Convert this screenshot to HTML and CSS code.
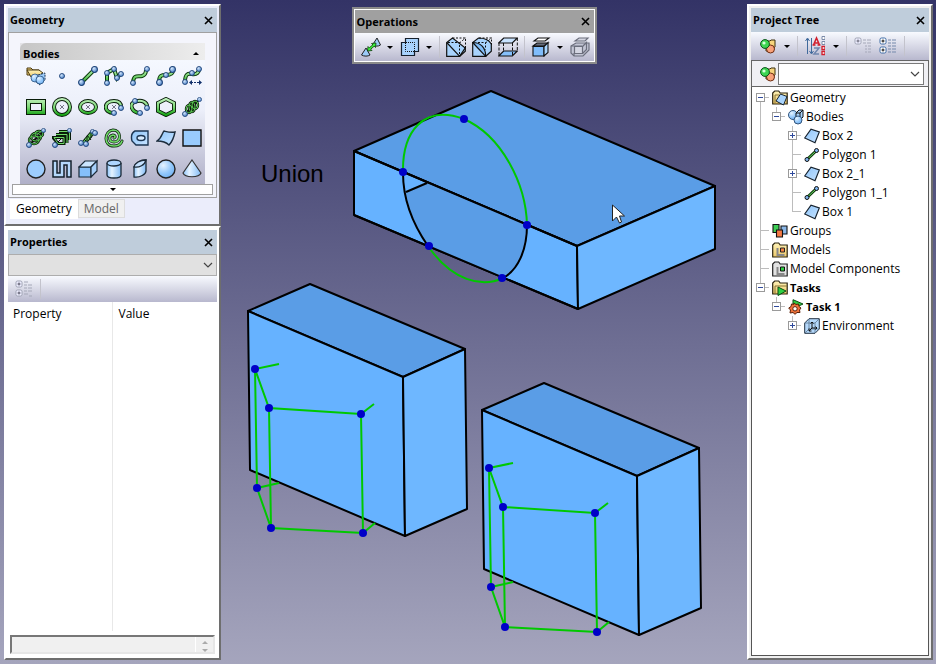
FILE: index.html
```html
<!DOCTYPE html>
<html lang="en">
<head>
<meta charset="utf-8">
<title>Model Workspace</title>
<link rel="stylesheet" href="styles.css">
</head>
<body>
<svg class="defs" aria-hidden="true">
  <defs>
    <linearGradient id="green" gradientUnits="userSpaceOnUse" x1="0" y1="1" x2="0" y2="19"><stop offset="0" stop-color="#c4f2c0"/><stop offset=".5" stop-color="#7dd877"/><stop offset="1" stop-color="#0a9c08"/></linearGradient>
    <linearGradient id="sky" x1="0" y1="0" x2="1" y2="1"><stop offset="0" stop-color="#8fc6fb"/><stop offset="1" stop-color="#c6e2ff"/></linearGradient>
    <linearGradient id="shine"><stop offset="0" stop-color="#8cc4fa"/><stop offset=".35" stop-color="#e4f2ff"/><stop offset="1" stop-color="#82bcf6"/></linearGradient>
    <radialGradient id="ball" cx=".35" cy=".3" r=".8"><stop offset="0" stop-color="#e6f3ff"/><stop offset=".6" stop-color="#8fc6fb"/><stop offset="1" stop-color="#6faeee"/></radialGradient>
    <radialGradient id="knob" cx=".35" cy=".3" r=".8"><stop offset="0" stop-color="#d8ebff"/><stop offset="1" stop-color="#3a74c0"/></radialGradient>
    <linearGradient id="fold" x1="0" y1="0" x2="0" y2="1"><stop offset="0" stop-color="#fff3b8"/><stop offset="1" stop-color="#edc96a"/></linearGradient>
  </defs>
  <symbol id="dot" viewBox="0 0 6 6"><circle cx="3" cy="3" r="2.500" fill="url(#knob)" stroke="#1f4478" stroke-width=".9"/></symbol>
  <symbol id="i-import" viewBox="0 0 20 20">
    <path d="M1 4V2h4l2 2h6v2L8 9H1z" fill="#f7d57c" stroke="#4a3a10"/><path d="M1 4h12l4 3-7 4H5z" fill="url(#fold)" stroke="#4a3a10"/>
    <circle cx="9" cy="12" r="4" fill="url(#ball)" stroke="#28507c" stroke-width=".8"/><path d="M12 9l7-2v7l-5 5-4-3z" fill="#9ccbfa" stroke="#1c3552" stroke-dasharray="2 1"/><circle cx="14" cy="14" r="4" fill="url(#ball)" stroke="#28507c" stroke-width=".8"/>
  </symbol>
  <symbol id="i-point" viewBox="0 0 20 20"><use href="#dot" x="7" y="7" width="6" height="6"/></symbol>
  <symbol id="i-line" viewBox="0 0 20 20"><path d="M4 16 16 4" stroke="#0c3b0c" stroke-width="4"/><path d="M4 16 16 4" stroke="url(#green)" stroke-width="2"/><use href="#dot" x="0" y="13" width="7" height="7"/><use href="#dot" x="13" y="0" width="7" height="7"/></symbol>
  <symbol id="i-poly" viewBox="0 0 20 20"><g fill="none"><path d="M3 16V7l7-4 3 9 4-5" stroke="#0c3b0c" stroke-width="4"/><path d="M3 16V7l7-4 3 9 4-5" stroke="url(#green)" stroke-width="2"/></g><use href="#dot" x="0" y="14" width="6" height="6"/><use href="#dot" x="0" y="4" width="6" height="6"/><use href="#dot" x="7" y="0" width="6" height="6"/><use href="#dot" x="10" y="9" width="6" height="6"/><use href="#dot" x="14" y="5" width="6" height="6"/></symbol>
  <symbol id="i-curve" viewBox="0 0 20 20"><g fill="none"><path d="M3 16c1-8 5-5 9-6 3-1 4-3 4-6" stroke="#0c3b0c" stroke-width="4"/><path d="M3 16c1-8 5-5 9-6 3-1 4-3 4-6" stroke="url(#green)" stroke-width="2"/></g><use href="#dot" x="0" y="14" width="6" height="6"/><use href="#dot" x="14" y="0" width="6" height="6"/></symbol>
  <symbol id="i-spline" viewBox="0 0 20 20"><g fill="none"><path d="M3 16c0-7 3-7 7-7 6 0 7-2 7-5" stroke="#0c3b0c" stroke-width="4"/><path d="M3 16c0-7 3-7 7-7 6 0 7-2 7-5" stroke="url(#green)" stroke-width="2"/></g><use href="#dot" x="0" y="13" width="7" height="7"/><use href="#dot" x="7" y="6" width="6" height="6"/><use href="#dot" x="13" y="0" width="7" height="7"/></symbol>
  <symbol id="i-splinefit" viewBox="0 0 20 20"><g fill="none"><path d="M3 16c0-8 3-9 7-8 5 1 7-2 7-5" stroke="#0c3b0c" stroke-width="4"/><path d="M3 16c0-8 3-9 7-8 5 1 7-2 7-5" stroke="url(#green)" stroke-width="2"/></g><use href="#dot" x="0" y="13" width="6" height="6"/><use href="#dot" x="7" y="4" width="6" height="6"/><use href="#dot" x="14" y="0" width="6" height="6"/><path d="M8 16.500h3m1 0h2m1 0h4" stroke="#12306a"/><path d="m7 16.500 3-2.500v5zM20 16.500 17 14v5z" fill="#12306a"/></symbol>
  <symbol id="i-rect" viewBox="0 0 20 20"><path d="M2.500 4.500h15v11h-15z" fill="none" stroke="#081c08" stroke-width="5"/><path d="M2.500 4.500h15v11h-15z" fill="none" stroke="url(#green)" stroke-width="3"/></symbol>
  <symbol id="i-circle" viewBox="0 0 20 20"><g fill="none"><circle cx="10" cy="10" r="8" stroke="#081c08" stroke-width="4"/><circle cx="10" cy="10" r="8" stroke="url(#green)" stroke-width="2.200"/><path d="m8 8 4 4m0-4-4 4" stroke="#667" stroke-width=".9"/></g></symbol>
  <symbol id="i-ellipse" viewBox="0 0 20 20"><g fill="none"><ellipse cx="10" cy="10" rx="8" ry="6" stroke="#081c08" stroke-width="4"/><ellipse cx="10" cy="10" rx="8" ry="6" stroke="url(#green)" stroke-width="2.200"/><path d="m8 8 4 4m0-4-4 4" stroke="#667" stroke-width=".9"/></g></symbol>
  <symbol id="i-earc" viewBox="0 0 20 20"><g fill="none"><path d="M10 16C-1 16-1 4 10 4c5 0 7 2 7 6" stroke="#081c08" stroke-width="4"/><path d="M10 16C-1 16-1 4 10 4c5 0 7 2 7 6" stroke="url(#green)" stroke-width="2.200"/><path d="m8 8 4 4m0-4-4 4" stroke="#667" stroke-width=".9"/></g><use href="#dot" x="7" y="13" width="6" height="6"/><use href="#dot" x="14" y="8" width="6" height="6"/></symbol>
  <symbol id="i-arc" viewBox="0 0 20 20"><g fill="none"><path d="M8 16C1 14-1 6 5 5c6-3 13 0 12 6" stroke="#081c08" stroke-width="4"/><path d="M8 16C1 14-1 6 5 5c6-3 13 0 12 6" stroke="url(#green)" stroke-width="2.200"/></g><use href="#dot" x="2" y="1" width="6" height="6"/><use href="#dot" x="7" y="13" width="6" height="6"/><use href="#dot" x="14" y="8" width="6" height="6"/></symbol>
  <symbol id="i-hex" viewBox="0 0 20 20"><g fill="none"><path d="m10 2 8 4v8l-8 4-8-4V6z" stroke="#081c08" stroke-width="4"/><path d="m10 2 8 4v8l-8 4-8-4V6z" stroke="url(#green)" stroke-width="2.200"/></g></symbol>
  <symbol id="i-helix" viewBox="0 0 20 20"><g fill="none"><path d="M3 17 18 2" stroke="#111" stroke-width="2"/><g stroke="#081c08" stroke-width="2.400"><ellipse cx="7" cy="12" rx="3" ry="4"/><ellipse cx="10" cy="10" rx="3" ry="5"/><ellipse cx="13" cy="8" rx="3" ry="4"/></g><g stroke="#5ccc54"><ellipse cx="7" cy="12" rx="3" ry="4"/><ellipse cx="10" cy="10" rx="3" ry="5"/><ellipse cx="13" cy="8" rx="3" ry="4"/></g></g><use href="#dot" x="0" y="14" width="6" height="6"/><use href="#dot" x="15" y="0" width="5" height="5"/></symbol>
  <symbol id="i-helix2" viewBox="0 0 20 20"><g fill="none"><path d="M3 17 18 3" stroke="#111" stroke-width="2"/><g stroke="#081c08" stroke-width="2.400"><ellipse cx="8" cy="12" rx="5" ry="4"/><ellipse cx="10" cy="9" rx="5" ry="4"/><ellipse cx="13" cy="6" rx="4" ry="3"/></g><g stroke="#5ccc54"><ellipse cx="8" cy="12" rx="5" ry="4"/><ellipse cx="10" cy="9" rx="5" ry="4"/><ellipse cx="13" cy="6" rx="4" ry="3"/></g></g><use href="#dot" x="0" y="14" width="6" height="6"/><use href="#dot" x="15" y="0" width="5" height="5"/></symbol>
  <symbol id="i-coil" viewBox="0 0 20 20"><g fill="none"><path d="M3 17 18 2" stroke="#111"/><path d="M7 3.500h10.500V12M4 6.500h11V15M1 9.500h11v6H6z" stroke="#081c08" stroke-width="3"/><path d="M7 3.500h10.500V12M4 6.500h11V15M2 9.500h10v6H6z" stroke="#6fd868"/></g><use href="#dot" x="0" y="14" width="6" height="6"/><use href="#dot" x="15" y="0" width="5" height="5"/></symbol>
  <symbol id="i-path" viewBox="0 0 20 20"><path d="M5 16 15 4" stroke="#081c08" stroke-width="5"/><path d="M5 16 15 4" stroke="#62c95b" stroke-width="3"/><path d="m6 11 4 4m-1-8 4 5M9 8v6M13 5v5" stroke="#081c08"/><use href="#dot" x="0" y="12" width="6" height="6"/><use href="#dot" x="5" y="13" width="6" height="6"/><use href="#dot" x="12" y="1" width="5" height="5"/><use href="#dot" x="14" y="2" width="6" height="6"/></symbol>
  <symbol id="i-spiral" viewBox="0 0 20 20"><g fill="none" stroke-linecap="round"><path d="M10 10c2-1 1-3-1-3-5 1-4 7 1 7 8 0 7-12-1-12C0 3-1 18 10 18c4 0 7-2 8-5" stroke="#081c08" stroke-width="3"/><path d="M10 10c2-1 1-3-1-3-5 1-4 7 1 7 8 0 7-12-1-12C0 3-1 18 10 18c4 0 7-2 8-5" stroke="#6fd868" stroke-width="1.700"/></g></symbol>
  <symbol id="i-plate" viewBox="0 0 20 20"><path d="M5 3h13v14H6l-4-4C1 9 1 5 5 3z" fill="url(#sky)" stroke="#1c3552" stroke-width="1.400"/><ellipse cx="11" cy="10" rx="4" ry="2.500" fill="#d9ecff" stroke="#1c3552" stroke-width="1.400"/></symbol>
  <symbol id="i-surface" viewBox="0 0 20 20"><path d="M1 13C6 10 6 5 8 3c4 1 7 2 11 1-1 5-2 9-6 13-3-3-7-4-12-4z" fill="url(#sky)" stroke="#1c2c3c" stroke-width="1.400"/></symbol>
  <symbol id="i-square" viewBox="0 0 20 20"><path d="M1 2h18v16H1z" fill="#99cbfd" stroke="#111" stroke-width="1.400"/></symbol>
  <symbol id="i-disk" viewBox="0 0 20 20"><circle cx="10" cy="10" r="9" fill="#9dcdfd" stroke="#222" stroke-width="1.400"/></symbol>
  <symbol id="i-snake" viewBox="0 0 20 20"><path d="M1 2h4v12h3V2h11v16h-4V6h-3v12H1z" fill="#b5d8fb" stroke="#15202c" stroke-width="1.500"/></symbol>
  <symbol id="i-box" viewBox="0 0 20 20"><g stroke="#1b2a38" stroke-width="1.200"><path d="M1 8h12v10H1z" fill="#85bffa"/><path d="m1 8 6-6h12l-6 6z" fill="#cbe5ff"/><path d="m13 8 6-6v10l-6 6z" fill="#a6d0fb"/></g></symbol>
  <symbol id="i-cyl" viewBox="0 0 20 20"><path d="M3 4v12c0 4 14 4 14 0V4" fill="url(#shine)" stroke="#1b2a38" stroke-width="1.300"/><ellipse cx="10" cy="4" rx="7" ry="3" fill="#aed6ff" stroke="#1b2a38" stroke-width="1.300"/></symbol>
  <symbol id="i-prism" viewBox="0 0 20 20"><path d="M4 8v10c6 1 12-3 12-6V1C10 1 5 4 4 8z" fill="url(#shine)" stroke="#1b2a38" stroke-width="1.300"/><path d="M4 8c5 1 11-2 12-7C10 1 5 4 4 8z" fill="#c4e1ff" stroke="#1b2a38" stroke-width="1.300"/></symbol>
  <symbol id="i-sphere" viewBox="0 0 20 20"><circle cx="10" cy="10" r="9" fill="url(#ball)" stroke="#222" stroke-width="1.400"/></symbol>
  <symbol id="i-cone" viewBox="0 0 20 20"><path d="m10 1 9 13c-2 5-16 5-18 0z" fill="url(#shine)" stroke="#333" stroke-width="1.200"/></symbol>

  <symbol id="o-move" viewBox="0 0 20 20"><path d="M.5 18 5 11l4 7c-2 1.500-6 1.500-8.500 0zM11.500 8 16 1l3.500 7c-2 1.500-6 1.500-8 0z" fill="#9ccbf8" stroke="#222"/><path d="m6.500 14 .5-4.500 1.300 1.300 3.500-3L10.500 6.500 15 6l-.5 4.500-1.300-1.300-3.500 3 1.300 1.300z" fill="#3df03d" stroke="#083808" stroke-width=".8"/></symbol>
  <symbol id="o-union" viewBox="0 0 20 20"><path d="M5.500 1.500h13v13h-4v4h-13v-13h4z" fill="#a8d3fd" stroke="#15202c" stroke-width="1.200"/><path d="M5.500 6v8.500H14M6 5.500h8.500V14" fill="none" stroke="#111" stroke-dasharray="1 1"/></symbol>
  <symbol id="o-chamfer" viewBox="0 0 20 20"><path d="M.7 5.500v13.800h13l5.600-5V11L6.500 1z" fill="#a8d3fd" stroke="#111" stroke-width="1.200"/><path d="M.7 5.500l13 13.800M13.500 19.300l5.800-8.500" fill="none" stroke="#111" stroke-width="1.200"/><path d="M6.500 1h13v11M2 5.500h11.500v12M13.500 6l6-5" fill="none" stroke="#111" stroke-dasharray="2 1.500"/></symbol>
  <symbol id="o-fillet" viewBox="0 0 20 20"><path d="M.7 5.500v13.800h13l5.600-5V7C17 3 13 1 6.500 1z" fill="#a8d3fd" stroke="#111" stroke-width="1.200"/><path d="M.7 5.500c8 0 13 5 13 13.800z" fill="#80bdf8" stroke="#111" stroke-width="1.200"/><path d="M7 1h12.500v8M13.500 6l6-5M6 5.500h7.500v7" fill="none" stroke="#111" stroke-dasharray="2 1.500"/></symbol>
  <symbol id="o-shell" viewBox="0 0 20 20"><path d="m.7 6 5-5h13.600l-5 5z" fill="#c8e3ff" stroke="#111" stroke-width="1.200"/><path d="m.7 19 5-5h13.600l-5 5z" fill="#86c0fa" stroke="#111" stroke-width="1.200"/><path d="M1 6v13M14.500 6v13M19.300 1v13M5.500 6v8" stroke="#111" stroke-dasharray="3 1.500"/></symbol>
  <symbol id="o-cover" viewBox="0 0 20 20"><g stroke="#111" stroke-width="1.100"><path d="m2 9 4-3h11l-4 3z" fill="#666c7c"/><path d="m3 4 4-3h11l-4 3z" fill="#fff"/><path d="M2 9.500h11v9.500H2z" fill="#80bdfb"/><path d="m13 9.500 4-4v10L13 19z" fill="#aad5fd"/></g></symbol>
  <symbol id="o-copy" viewBox="0 0 20 20"><g stroke="#6b6e7c" stroke-width="1.200" fill="#d4d6e2"><path d="m5 4 4-3h9l-3 3z"/><path d="M1 9l5-3h13v7l-6 6H4l-3-3z" fill="#c2c5d4"/><path d="M4.500 9.500h8v7h-8z"/><path d="m12.500 9.500 4-4v7l-4 4M1 9h11M4 19v-3" fill="none"/></g></symbol>

  <symbol id="t-objects" viewBox="0 0 16 16"><path d="M6 3h4l1-1h4v7l-4 4H6z" fill="#f7d57c" stroke="#3b300e"/><circle cx="10.500" cy="11" r="4" fill="#f9a27a" stroke="#6b2b10"/><circle cx="5" cy="6" r="4.400" fill="#3ed552" stroke="#0b541b"/><circle cx="4" cy="5" r="1.600" fill="#d8ffdc"/></symbol>
  <symbol id="t-sort" viewBox="0 0 20 20"><path d="M2.500 18V3M.5 5l2-3 2 3M6.500 2v15m-2-2 2 3 2-3" fill="none" stroke="#406a9c"/><path d="m8.500 9 3-7 3 7M7.500 9h3m2 0h3M9.500 7h4" fill="none" stroke="#d21e2c" stroke-width="1.500"/><path d="M9 12h5l-5 6h5" fill="none" stroke="#6f86ae" stroke-width="1.500"/><g fill="#fff"><path d="M17 .5h3v3h-3zM17 5.500h3v3h-3z" stroke="#7b8aa8"/><path d="M17 10.500h3v3h-3zM17 15.500h3v3h-3z" stroke="#d21e2c" stroke-width="1.300"/></g></symbol>
  <symbol id="t-collapse" viewBox="0 0 18 18"><rect x="1" y="1" width="6" height="6" rx="1.500" fill="#eef" stroke="#9fa3b3"/><path d="M2.500 4h3M4 2.500v3" stroke="#667"/><path d="M9 3h3m1 0h4M9 6h3m1 0h4M11 9h2m1 0h3M11 12h2m1 0h3M11 15h2m1 0h3" stroke="#a5a8b8"/></symbol>
  <symbol id="t-expand" viewBox="0 0 18 18"><rect x="1" y="1" width="6" height="6" rx="1.500" fill="#fff" stroke="#3d6ba5"/><rect x="1" y="10" width="6" height="6" rx="1.500" fill="#fff" stroke="#3d6ba5"/><path d="M2.500 4h3M4 2.500v3M2.500 13h3M4 11.500v3" stroke="#111"/><path d="M9 3h3m1 0h4M9 6h3m1 0h4M9 9h3m1 0h4M9 12h3m1 0h4M9 15h3m1 0h4" stroke="#7489ab"/></symbol>
  <symbol id="t-expand-off" viewBox="0 0 18 18"><rect x="1" y="1" width="6" height="6" rx="1.500" fill="#eef" stroke="#9fa3b3"/><rect x="1" y="10" width="6" height="6" rx="1.500" fill="#eef" stroke="#9fa3b3"/><path d="M2.500 4h3M4 2.500v3M2.500 13h3M4 11.500v3" stroke="#556"/><path d="M9 2h4M9 5h3m1 0h4M9 8h3m1 0h4M9 11h3m1 0h4M9 14h4m1 2h3" stroke="#a5a8b8"/></symbol>

  <symbol id="f-geometry" viewBox="0 0 16 16"><path d="M.7 14V3l2-2h4l1.500 2h7v11z" fill="url(#fold)" stroke="#2b2410" stroke-width="1.200"/><path d="M3 13V5h4" fill="none" stroke="#8a7434"/><path d="M8.500 4 15 6.500 11.500 15 4 11z" fill="#a9d4fd" stroke="#16222e"/></symbol>
  <symbol id="f-bodies" viewBox="0 0 16 16"><circle cx="5" cy="6" r="4.500" fill="url(#ball)" stroke="#33557c"/><path d="M8 4l3-3h4v7l-3 3H8z" fill="#a9d3fb" stroke="#111"/><path d="M8 4h4v6M12 4l3-3" fill="none" stroke="#111"/><circle cx="10" cy="11" r="4" fill="url(#ball)" stroke="#33557c"/></symbol>
  <symbol id="f-box" viewBox="0 0 16 16"><path d="M.7 10 7 1.200 15.300 4 11 14.700z" fill="url(#sky)" stroke="#16222e" stroke-width="1.200"/></symbol>
  <symbol id="f-polygon" viewBox="0 0 16 16"><path d="M3 12.500 12.500 3.500" stroke="#0c3b0c" stroke-width="3"/><path d="M3 12.500 12.500 3.500" stroke="#6ad463" stroke-width="1"/><circle cx="3" cy="12.500" r="2" fill="#7fb4ec" stroke="#111"/><circle cx="12.500" cy="3.500" r="2" fill="#7fb4ec" stroke="#111"/></symbol>
  <symbol id="f-groups" viewBox="0 0 16 16"><g stroke="#111" stroke-width="1.100"><path d="M9 3h6v8H9z" fill="#8bb8e8"/><path d="M1 1.500h6v8H1z" fill="#3fce55"/><path d="M4.500 7h6v7h-6z" fill="#f47a45"/></g></symbol>
  <symbol id="f-models" viewBox="0 0 16 16"><path d="M.7 15V3l2-2h4l1.500 2h7v12z" fill="url(#fold)" stroke="#2b2410" stroke-width="1.200"/><path d="M5.500 6v7h7" fill="none" stroke="#888" stroke-width="2"/><path d="M8.500 6h4v4h-4z" fill="#f58142" stroke="#222"/></symbol>
  <symbol id="f-components" viewBox="0 0 16 16"><path d="M.7 15V3l2-2h4l1.500 2h7v12z" fill="#e2e2e2" stroke="#222" stroke-width="1.200"/><path d="M5.500 6v7h7" fill="none" stroke="#888" stroke-width="2"/><path d="M8.500 6h4v4h-4z" fill="#2fd043" stroke="#111"/></symbol>
  <symbol id="f-tasks" viewBox="0 0 16 16"><path d="M.7 14V3l2-2h4l1.500 2h7v11z" fill="url(#fold)" stroke="#2b2410" stroke-width="1.200"/><path d="M3 14V6h12" fill="none" stroke="#8a7434"/><path d="M6 7v8.500l8-4.500z" fill="#2fd043" stroke="#0b4b12"/></symbol>
  <symbol id="f-task" viewBox="0 0 16 16"><path d="M5 .7v9L15 5z" fill="#2fd043" stroke="#0b4b12"/><path d="m6 4 2 1.500L10.500 5l.5 2.500 2 1.500-1.500 2 .5 2.500-3 0L7 15.300 5 13.500l-3 .5.500-3L.7 9l2.300-1.500L3.500 5l2.500.3z" fill="#f0743c" stroke="#5c2008"/><circle cx="7" cy="9.800" r="2.200" fill="#fff" stroke="#5c2008"/></symbol>
  <symbol id="f-env" viewBox="0 0 16 16"><path d="M.7 5 5 .7h10.300V11L11 15.300H.7z" fill="#b4d8fb" stroke="#234"/><path d="M1 5h10v10M11 5l4-4M5 1v10h10M5 11l-4 4" fill="none" stroke="#5c7690" stroke-width=".8"/><path d="M8 4v6h5M8 10l-3 3M6.500 5.500 8 4l1.500 1.500M11.500 8.500 13 10l-1.500 1.500M5 10.500V13h2.500" fill="none" stroke="#111"/></symbol>
  <symbol id="close" viewBox="0 0 9 9"><path d="m1 1 7 7m0-7L1 8" stroke="#000" stroke-width="1.600"/></symbol>
  <symbol id="chev" viewBox="0 0 10 6"><path d="m1 1 4 4 4-4" fill="none" stroke="#444" stroke-width="1.200"/></symbol>
  <symbol id="down" viewBox="0 0 6 3"><path d="M0 0h6L3 3z"/></symbol>
  <symbol id="up" viewBox="0 0 6 3"><path d="M0 3h6L3 0z"/></symbol>
</svg>

<svg class="scene" viewBox="0 0 936 664" role="img" aria-label="Union of boxes">
  <g class="edge">
    <path class="top" d="M354 151 491 91l224 95-138 60z"/>
    <path class="front" d="M354 151 577 246l1 63-224-94z"/>
    <path class="side" d="m577 246 138-60v63l-137 60z"/>
  </g>
  <path class="cut" d="M427 183 527 225C527 250 518 270 503 278L428 246C417 229 409 211 406 192z"/>
  <path class="wire" d="M354 151 577 246M354 215 578 309M406 192 427 183M428 246C412 223 403 197 403 173M503 278C518 270 527 250 527 225"/>
  <path class="sketch" d="M403 173C402 132 423 104 464 119C502 136 526 184 527 225M428 246C452 281 482 288 503 278"/>
  <g class="node"><circle cx="403" cy="172" r="4"/><circle cx="464" cy="119" r="4"/><circle cx="527" cy="225" r="4"/><circle cx="502" cy="278" r="4"/><circle cx="429" cy="246" r="4"/></g>
  <g id="solid">
    <g class="edge">
      <path class="top" d="m248 311 62-27 155 65-62 28z"/>
      <path class="front" d="m248 311 155 66 2 159-155-66z"/>
      <path class="side" d="m403 377 62-28 2 160-62 27z"/>
    </g>
    <path class="sketch" d="m279 364-24 5 14 39 92 6 13-10M255 369l2 119 14 40 92 5 12-10M269 408l2 120M361 414l2 119M257 488l22-5"/>
    <g class="node"><circle cx="255" cy="369" r="4"/><circle cx="269" cy="408" r="4"/><circle cx="361" cy="414" r="4"/><circle cx="257" cy="488" r="4"/><circle cx="271" cy="528" r="4"/><circle cx="363" cy="533" r="4"/></g>
  </g>
  <use href="#solid" x="234" y="99"/>
  <text class="caption" x="261" y="182">Union</text>
  <path d="M612.500 205v16l4-4 3 6 2-1-2-6h5z" fill="#fff" stroke="#222"/>
</svg>

<div class="workspace">
  <div class="left">
    <section class="dock geometry">
      <header class="bar"><h2>Geometry</h2><button class="x" aria-label="Close Geometry"><svg><use href="#close"/></svg></button></header>
      <div class="palette">
        <div class="group">
          <button class="group-title"><span>Bodies</span><svg><use href="#up"/></svg></button>
          <div class="tools">
            <button aria-label="Import"><svg><use href="#i-import"/></svg></button>
            <button aria-label="Point"><svg><use href="#i-point"/></svg></button>
            <button aria-label="Line"><svg><use href="#i-line"/></svg></button>
            <button aria-label="Polyline"><svg><use href="#i-poly"/></svg></button>
            <button aria-label="Curve"><svg><use href="#i-curve"/></svg></button>
            <button aria-label="Spline"><svg><use href="#i-spline"/></svg></button>
            <button aria-label="Fitted spline"><svg><use href="#i-splinefit"/></svg></button>
            <button aria-label="Rectangle"><svg><use href="#i-rect"/></svg></button>
            <button aria-label="Circle"><svg><use href="#i-circle"/></svg></button>
            <button aria-label="Ellipse"><svg><use href="#i-ellipse"/></svg></button>
            <button aria-label="Elliptic arc"><svg><use href="#i-earc"/></svg></button>
            <button aria-label="Arc"><svg><use href="#i-arc"/></svg></button>
            <button aria-label="Hexagon"><svg><use href="#i-hex"/></svg></button>
            <button aria-label="Helix"><svg><use href="#i-helix"/></svg></button>
            <button aria-label="Wide helix"><svg><use href="#i-helix2"/></svg></button>
            <button aria-label="Square coil"><svg><use href="#i-coil"/></svg></button>
            <button aria-label="Twisted path"><svg><use href="#i-path"/></svg></button>
            <button aria-label="Spiral"><svg><use href="#i-spiral"/></svg></button>
            <button aria-label="Plate"><svg><use href="#i-plate"/></svg></button>
            <button aria-label="Surface"><svg><use href="#i-surface"/></svg></button>
            <button aria-label="Sheet"><svg><use href="#i-square"/></svg></button>
            <button aria-label="Disk"><svg><use href="#i-disk"/></svg></button>
            <button aria-label="Meander"><svg><use href="#i-snake"/></svg></button>
            <button aria-label="Box"><svg><use href="#i-box"/></svg></button>
            <button aria-label="Cylinder"><svg><use href="#i-cyl"/></svg></button>
            <button aria-label="Prism"><svg><use href="#i-prism"/></svg></button>
            <button aria-label="Sphere"><svg><use href="#i-sphere"/></svg></button>
            <button aria-label="Cone"><svg><use href="#i-cone"/></svg></button>
          </div>
        </div>
        <button class="more" aria-label="More tools"><svg><use href="#down"/></svg></button>
      </div>
      <nav class="tabs"><button class="tab on">Geometry</button><button class="tab">Model</button></nav>
    </section>

    <section class="dock properties">
      <header class="bar"><h2>Properties</h2><button class="x" aria-label="Close Properties"><svg><use href="#close"/></svg></button></header>
      <div class="combo grey"><select aria-label="Object" disabled><option></option></select><svg><use href="#chev"/></svg></div>
      <div class="strip"><button aria-label="Expand all" disabled><svg class="s18"><use href="#t-expand-off"/></svg></button><i class="sep"></i></div>
      <table class="grid">
        <thead><tr><th>Property</th><th>Value</th></tr></thead>
        <tbody><tr><td></td><td></td></tr></tbody>
      </table>
      <div class="note"><textarea aria-label="Description" disabled></textarea><div class="spin"><svg><use href="#up"/></svg><svg><use href="#down"/></svg></div></div>
    </section>
  </div>

  <section class="float">
    <header class="bar"><h2>Operations</h2><button class="x" aria-label="Close Operations"><svg><use href="#close"/></svg></button></header>
    <div class="ops">
      <button aria-label="Transform"><svg><use href="#o-move"/></svg><svg class="caret"><use href="#down"/></svg></button>
      <button aria-label="Boolean"><svg><use href="#o-union"/></svg><svg class="caret"><use href="#down"/></svg></button>
      <i class="sep"></i>
      <button aria-label="Chamfer"><svg><use href="#o-chamfer"/></svg></button>
      <button aria-label="Fillet"><svg><use href="#o-fillet"/></svg></button>
      <button aria-label="Shell"><svg><use href="#o-shell"/></svg></button>
      <i class="sep"></i>
      <button aria-label="Cover"><svg><use href="#o-cover"/></svg><svg class="caret"><use href="#down"/></svg></button>
      <button aria-label="Imprint" disabled><svg><use href="#o-copy"/></svg></button>
    </div>
  </section>

  <section class="dock project">
    <header class="bar"><h2>Project Tree</h2><button class="x" aria-label="Close Project Tree"><svg><use href="#close"/></svg></button></header>
    <div class="strip">
      <button aria-label="Show objects"><svg class="s16"><use href="#t-objects"/></svg><svg class="caret"><use href="#down"/></svg></button><i class="sep"></i>
      <button aria-label="Sort"><svg><use href="#t-sort"/></svg><svg class="caret"><use href="#down"/></svg></button><i class="sep"></i>
      <button aria-label="Collapse" disabled><svg class="s18"><use href="#t-collapse"/></svg></button>
      <button aria-label="Expand"><svg class="s18"><use href="#t-expand"/></svg></button><i class="sep"></i>
    </div>
    <div class="filter"><svg class="s16"><use href="#t-objects"/></svg><div class="combo"><select aria-label="Filter"><option></option></select><svg><use href="#chev"/></svg></div></div>
    <div class="treebox">
      <ul class="tree">
        <li><div class="row"><button class="tw" aria-label="Collapse Geometry"></button><svg><use href="#f-geometry"/></svg><span>Geometry</span></div>
          <ul>
            <li><div class="row"><button class="tw" aria-label="Collapse Bodies"></button><svg><use href="#f-bodies"/></svg><span>Bodies</span></div>
              <ul>
                <li><div class="row"><button class="tw plus" aria-label="Expand Box 2"></button><svg><use href="#f-box"/></svg><span>Box 2</span></div></li>
                <li><div class="row leaf"><svg><use href="#f-polygon"/></svg><span>Polygon 1</span></div></li>
                <li><div class="row"><button class="tw plus" aria-label="Expand Box 2_1"></button><svg><use href="#f-box"/></svg><span>Box 2_1</span></div></li>
                <li><div class="row leaf"><svg><use href="#f-polygon"/></svg><span>Polygon 1_1</span></div></li>
                <li><div class="row leaf"><svg><use href="#f-box"/></svg><span>Box 1</span></div></li>
              </ul>
            </li>
          </ul>
        </li>
        <li><div class="row leaf"><svg><use href="#f-groups"/></svg><span>Groups</span></div></li>
        <li><div class="row leaf"><svg><use href="#f-models"/></svg><span>Models</span></div></li>
        <li><div class="row leaf"><svg><use href="#f-components"/></svg><span>Model Components</span></div></li>
        <li><div class="row"><button class="tw" aria-label="Collapse Tasks"></button><svg><use href="#f-tasks"/></svg><b>Tasks</b></div>
          <ul>
            <li><div class="row"><button class="tw" aria-label="Collapse Task 1"></button><svg><use href="#f-task"/></svg><b>Task 1</b></div>
              <ul>
                <li><div class="row"><button class="tw plus" aria-label="Expand Environment"></button><svg><use href="#f-env"/></svg><span>Environment</span></div></li>
              </ul>
            </li>
          </ul>
        </li>
      </ul>
    </div>
  </section>
</div>
</body>
</html>
```
FILE: styles.css
```css
* { box-sizing: border-box; }
html, body { height: 100%; margin: 0; }
body {
  position: relative;
  overflow: hidden;
  font: 12px/16px "Open Sans", "Noto Sans", sans-serif;
  color: #000;
  background: linear-gradient(#333366, #a5a5bd);
}
button { padding: 0; border: 0; background: none; font: inherit; color: inherit; }
button, .filter { display: flex; align-items: center; justify-content: center; }
svg { display: block; width: 20px; height: 20px; flex: none; }
svg.s16 { width: 16px; height: 16px; }
svg.s18 { width: 18px; height: 18px; }
svg.caret { width: 6px; height: 3px; margin-left: 8px; }
.defs { position: absolute; width: 0; height: 0; }

.scene { position: absolute; inset: 0; width: 100%; height: 100%; }
.edge { stroke: #000; stroke-width: 2; stroke-linejoin: round; }
.top, .cut { fill: #5a9de6; }
.front { fill: #66b2ff; }
.side { fill: #6eb7ff; }
.wire { fill: none; stroke: #000; stroke-width: 2; }
.sketch { fill: none; stroke: #00c800; stroke-width: 2; }
.node { fill: #0000c8; }
.caption { font: 24px "Liberation Sans", sans-serif; }

.workspace {
  position: relative;
  display: grid;
  grid-template-columns: 217px 1fr 186px;
  justify-items: center;
  height: 100vh;
  padding: 4px 3px 4px 4px;
}
.left { display: flex; flex-direction: column; width: 100%; min-height: 0; }
.dock {
  display: flex;
  flex-direction: column;
  width: 100%;
  padding: 2px;
  border: 2px solid;
  border-color: #fff #6e6e6e #6e6e6e #fff;
  background: #f0f0f0;
}
.bar {
  display: flex;
  align-items: center;
  justify-content: space-between;
  height: 24px;
  padding: 0 4px 0 2px;
  background: #bfcddb;
}
h2 { margin: 0; font-size: 11px; line-height: 16px; font-weight: 700; }
.x svg { width: 9px; height: 9px; }

.geometry { background: #ebedfb; }
.palette { border: 1px solid #a0a0a0; background: #f4f5fc; padding: 10px 3px 2px; }
.group { margin: 0 8px; background: #e4e4e8; }
.group-title {
  width: 100%;
  height: 17px;
  justify-content: space-between;
  padding: 4px 6px 0 3px;
  border-radius: 6px 0 0 0;
  background: linear-gradient(90deg, #c6c6c6, #ededed);
  font-size: 11px;
  font-weight: 700;
}
.group-title svg, .more svg { width: 6px; height: 3px; }
.tools {
  display: grid;
  grid-template-columns: repeat(7, 26px);
  justify-content: end;
  grid-auto-rows: 31px;
  background: linear-gradient(#f5f8ff, #eceffa 40%, #b0b0c8);
}
.more { width: 100%; height: 11px; border: 1px solid #a0a0a0; background: #fff; }
.tabs { display: flex; align-items: flex-start; height: 24px; padding: 1px 2px; }
.tab { height: 19px; padding: 1px 5px; border: 1px solid #dcdcdc; background: #f0f0f0; color: #666; }
.tab.on { background: #fff; color: #000; border-color: #fff; height: 20px; }

.properties { flex: 1; min-height: 0; background: #fff; }
.combo { display: grid; align-items: center; height: 22px; }
.combo > * { grid-area: 1 / 1; }
.combo select {
  appearance: none;
  width: 100%;
  height: 100%;
  border: 1px solid #7a7a7a;
  border-radius: 0;
  background: #fff;
  font: inherit;
}
.combo svg { justify-self: end; width: 10px; height: 6px; margin-right: 4px; pointer-events: none; }
.combo.grey select { border-color: #adadad; background: #e1e1e1; opacity: 1; }
.strip, .ops { display: flex; align-items: center; background: linear-gradient(#f8faff, #b8b8ce); }
.strip { height: 26px; }
.sep { width: 1px; height: 20px; background: #c3c3cc; }
.properties .strip button { width: 32px; }

.grid { width: 100%; flex: 1; display: grid; grid-template-rows: 24px 1fr; }
.grid thead, .grid tbody { display: grid; }
.grid tr { display: grid; grid-template-columns: 1fr 1fr; }
.grid th, .grid td { padding: 4px 6px; font-weight: 400; text-align: left; }
.grid td:first-child, .grid th:first-child { border-right: 1px solid #e8e8e8; padding-left: 5px; }
.note {
  display: flex;
  height: 19px;
  margin: 4px 2px 2px;
  border: 2px solid;
  border-color: #777 #e6e6e6 #e6e6e6 #777;
  background: #f0f0f0;
}
.note textarea { flex: 1; min-width: 0; height: 100%; padding: 0; border: 0; resize: none; background: none; }
.spin { display: flex; flex-direction: column; align-items: center; justify-content: space-between; width: 18px; padding: 4px 0 0; border-left: 1px solid #fff; fill: #aaa; }
.spin svg { width: 6px; height: 3px; }

.float { align-self: start; margin-top: 3px; margin-right: 20px; padding: 1px; border: 2px solid #8a8a8a; background: #fff; }
.float .bar { height: 23px; background: #a0a0a0; }
.ops { height: 28px; padding: 0 4px 0 6px; gap: 6px; }
.ops .sep { height: 22px; }
.ops svg.caret { margin: 0 1px 0 6px; }

.project { justify-self: stretch; width: auto; }
.project .strip { height: 28px; padding-left: 9px; gap: 7px; }
.filter { height: 27px; border: 1px solid #666; background: #f0f0f4; gap: 2px; padding: 0 4px 0 8px; }
.filter .combo { flex: 1; }
.treebox { flex: 1; min-height: 0; border: 1px solid #555; border-top: 0; background: #fff; overflow: hidden; }
.tree, .tree ul { list-style: none; margin: 0; padding: 0; }
.tree { padding: 1px 0 0 1px; }
.tree ul { padding-left: 16px; }
.tree li { position: relative; }
.tree li::before { content: ""; position: absolute; left: 7px; top: 0; bottom: 0; border-left: 1px solid #bcbcbc; }
.tree li:last-child::before { bottom: auto; height: 10px; }
.tree > li:first-child::before { top: 10px; }
.row { display: flex; align-items: center; height: 19px; gap: 2px; white-space: nowrap; }
.row::before { content: ""; width: 8px; margin: 0 0 0 8px; border-top: 1px solid #bcbcbc; }
.row svg { width: 16px; height: 16px; margin-left: 1px; }
.row b { font-size: 11px; font-weight: 700; }
.tw {
  position: absolute;
  left: 3px;
  top: 5px;
  width: 9px;
  height: 9px;
  border: 1px solid #9a9a9a;
  background: linear-gradient(#2f4a9c, #2f4a9c) center / 5px 1px no-repeat, #fff;
}
.tw.plus { background: linear-gradient(#2f4a9c, #2f4a9c) center / 5px 1px no-repeat, linear-gradient(#2f4a9c, #2f4a9c) center / 1px 5px no-repeat, #fff; }
```
